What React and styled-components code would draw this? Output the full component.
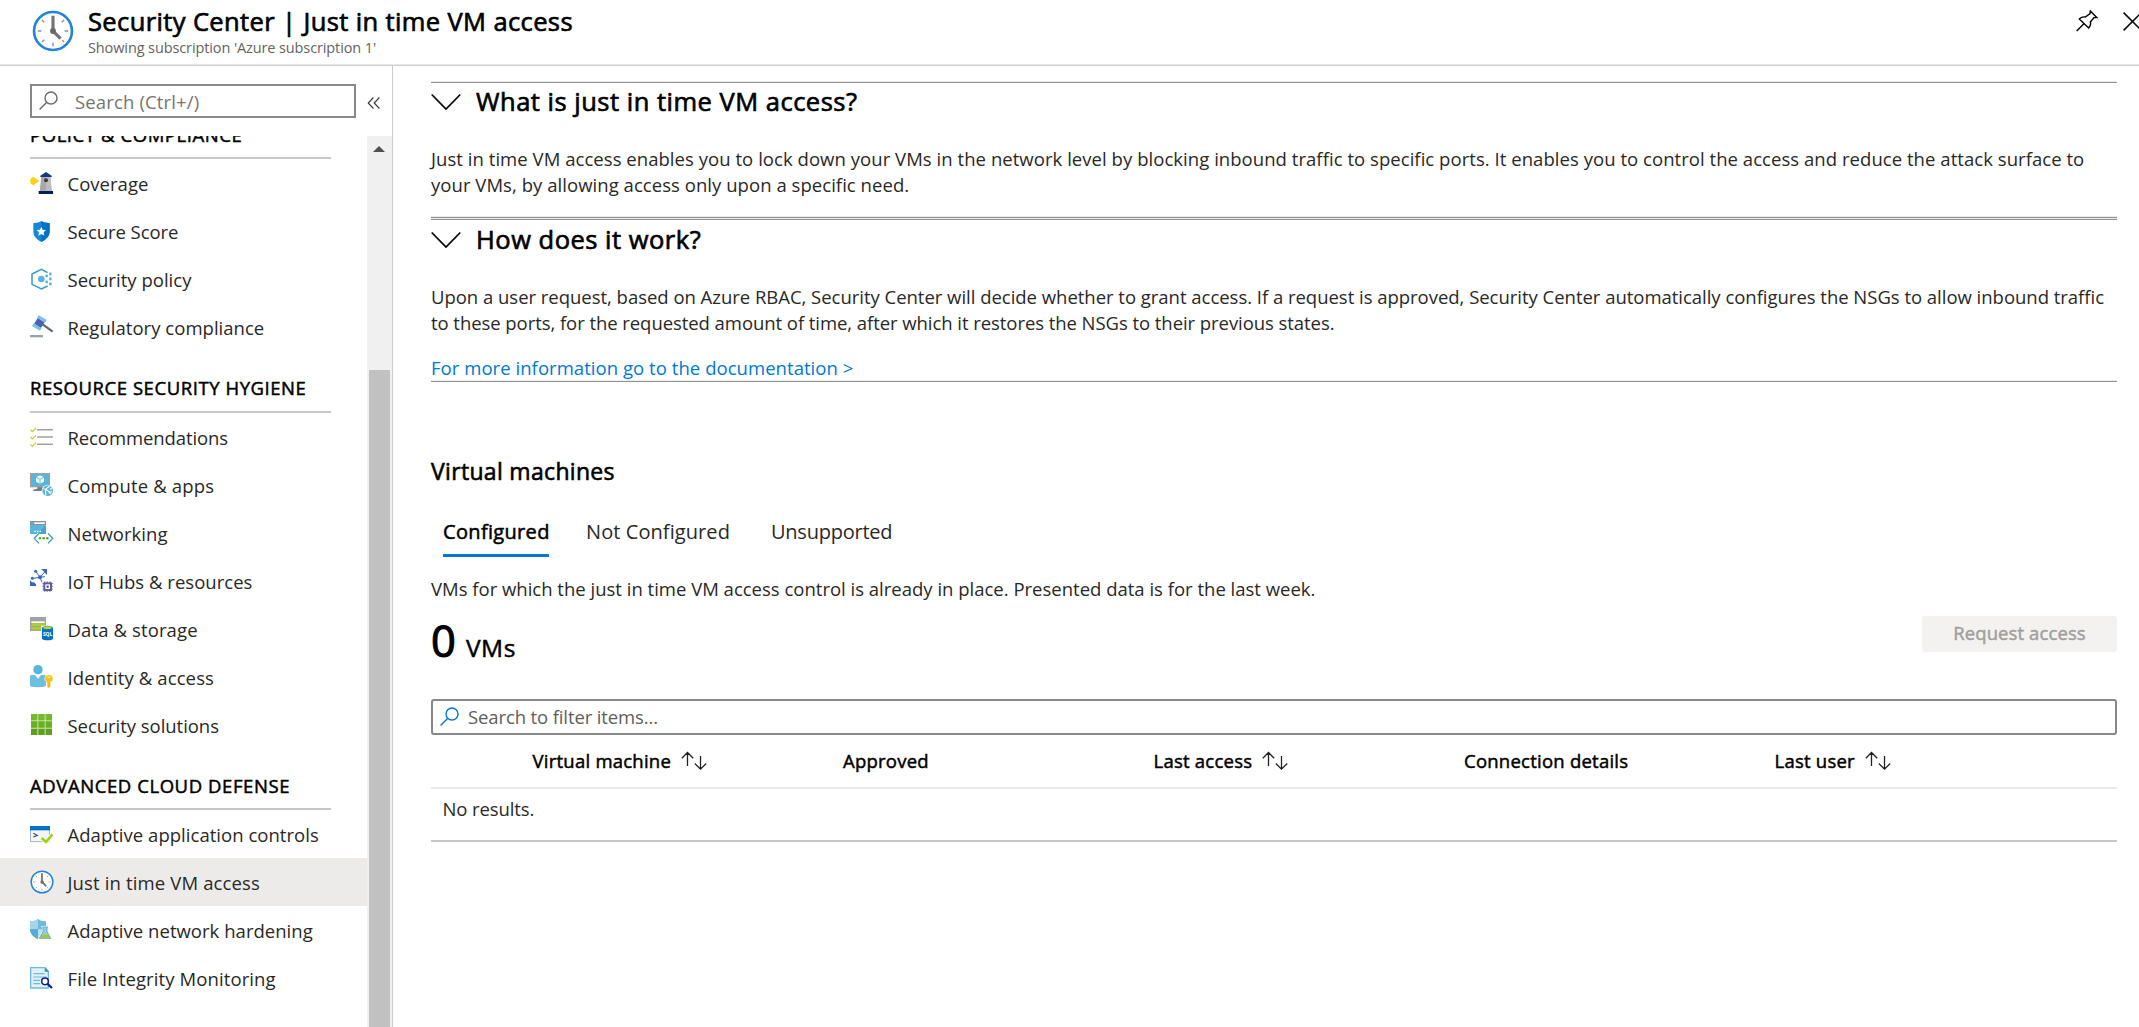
import React from "react";
import styled, { createGlobalStyle, css } from "styled-components";

const GlobalStyle = createGlobalStyle`
  * { box-sizing: border-box; }
  html, body { margin: 0; padding: 0; background: #fff; overflow: hidden; }
  body { font-family: "Open Sans", "Noto Sans", sans-serif; font-size: 18.5px; color: #292827; }
`;

/* A weight between regular and semibold, used by every heading. */
const semibold = css`
  font-weight: 400;
  -webkit-text-stroke: 0.026em currentColor;
`;

/* ---------- shell ---------- */
const Page = styled.div`
  width: 100vw;
  height: 100vh;
  display: flex;
  flex-direction: column;
  overflow: hidden;
`;
const Header = styled.header`
  height: 66px;
  flex: none;
  display: flex;
  align-items: flex-start;
  padding: 0 0 0 32px;
  border-bottom: 1px solid #cccccc;
  box-shadow: inset 0 -1px 0 #e9e9e9;
`;
const HeaderIcon = styled.div`
  width: 42px;
  height: 42px;
  margin-top: 10px;
  svg { display: block; }
`;
const Titles = styled.div`
  flex: 1;
  padding: 3px 0 0 14px;
`;
const Title = styled.h1`
  margin: 0;
  font-size: 25.5px;
  line-height: 36px;
  ${semibold}
  letter-spacing: 0.38px;
  color: #000;
`;
const Subtitle = styled.div`
  font-size: 14.5px;
  line-height: 20px;
  margin-top: -1px;
  letter-spacing: -0.11px;
  color: #646362;
`;
const HeaderActions = styled.div`
  display: flex;
  gap: 25px;
  padding-top: 10px;
  margin-right: -3px;
  svg { display: block; }
`;
const Body = styled.div`
  flex: 1;
  min-height: 0;
  display: flex;
`;

/* ---------- sidebar ---------- */
const Sidebar = styled.aside`
  width: 393px;
  flex: none;
  display: flex;
  flex-direction: column;
  border-right: 1px solid #cccccc;
`;
const SidebarTop = styled.div`
  display: flex;
  align-items: center;
  padding: 18px 0 18px 30px;
  gap: 11px;
`;
const MenuSearch = styled.div`
  width: 326px;
  height: 34px;
  display: flex;
  align-items: center;
  border: 2px solid #8a8886;
  padding-left: 7px;
  gap: 17px;
  color: #76746f;
  letter-spacing: 0.15px;
  line-height: 29px;
`;
const CollapseButton = styled.div`
  padding-top: 3px;
  svg { display: block; }
`;
const NavArea = styled.div`
  flex: 1;
  min-height: 0;
  display: flex;
  overflow: hidden;
`;
const NavList = styled.nav`
  width: 367px;
  flex: none;
  overflow: hidden;
`;
const Group = styled.section`
  &:first-child { margin-top: -39px; }
`;
const GroupTitle = styled.h2`
  margin: 0 36px 0 30px;
  height: ${(p) => p.$h}px;
  padding-top: ${(p) => p.$pad}px;
  border-bottom: 2px solid #c8c8c8;
  font-size: 18.5px;
  line-height: 29px;
  ${semibold}
  letter-spacing: ${(p) => p.$ls}px;
  color: #000;
  white-space: nowrap;
`;
const Item = styled.div`
  height: 48px;
  display: flex;
  align-items: center;
  gap: 13.5px;
  padding-left: 30px;
  background: ${(p) => (p.$active ? "#edebe9" : "transparent")};
  white-space: nowrap;
  svg { flex: none; }
`;
const ItemLabel = styled.span`
  padding-top: 1px;
  line-height: 26px;
  letter-spacing: ${(p) => p.$ls}px;
`;
const Track = styled.div`
  width: 25px;
  background: #f0f0f0;
  display: flex;
  flex-direction: column;
  align-items: flex-start;
  padding-left: 2px;
`;
const TrackArrow = styled.div`
  height: 234px;
  padding: 10px 0 0 4px;
  svg { display: block; }
`;
const Thumb = styled.div`
  width: 21px;
  flex: 1;
  background: #c1c1c1;
`;

/* ---------- content ---------- */
const Content = styled.main`
  flex: 1;
  min-width: 0;
  padding: 15px 22px 0 38px;
`;
const Accordion = styled.section`
  padding: ${(p) => p.$top || 2}px 0 ${(p) => p.$bottom}px;
  border-top: 1px solid #ececec;
  border-bottom: 1px solid #919191;
  box-shadow: inset 0 1px 0 #919191, inset 0 -1px 0 #ececec;
`;
const AccordionTitle = styled.h2`
  margin: 0 0 27px;
  display: flex;
  align-items: center;
  gap: 15px;
  font-size: 25.5px;
  line-height: 36px;
  ${semibold}
  color: #000;
  letter-spacing: 0.5px;
  svg { position: relative; top: 1px; }
`;
const Paragraph = styled.p`
  margin: 0;
  line-height: 26px;
  white-space: nowrap;
  letter-spacing: ${(p) => p.$ls || 0}px;
`;
const DocLink = styled.a`
  display: block;
  margin-top: 19px;
  line-height: 26px;
  color: #0078d4;
  letter-spacing: 0.05px;
`;
const SectionTitle = styled.h2`
  margin: 74px 0 0;
  font-size: 23px;
  line-height: 30px;
  ${semibold}
  letter-spacing: 0.32px;
  color: #000;
`;
const Tabs = styled.div`
  display: flex;
  gap: 37px;
  margin-top: 30px;
  padding-left: 12px;
`;
const Tab = styled.div`
  width: ${(p) => p.$w}px;
  font-size: 20px;
  line-height: 32px;
  padding-bottom: 6px;
  white-space: nowrap;
  ${(p) => p.$active && semibold}
  letter-spacing: ${(p) => p.$ls}px;
  color: ${(p) => (p.$active ? "#000" : "#292827")};
  border-bottom: 3px solid ${(p) => (p.$active ? "#0078d4" : "transparent")};
`;
const TabIntro = styled(Paragraph)`
  margin-top: 19px;
`;
const Summary = styled.div`
  margin-top: 12px;
  height: 50px;
  display: flex;
  justify-content: space-between;
  align-items: flex-start;
`;
const Count = styled.div`
  display: flex;
  align-items: baseline;
  gap: 10px;
  padding-top: 2px;
  color: #000;
  ${semibold}
`;
const CountNumber = styled.span`
  font-size: 43.5px;
  line-height: 50px;
  width: 25px;
  -webkit-text-stroke: 1.1px currentColor;
`;
const CountUnit = styled.span`
  font-size: 24.5px;
  letter-spacing: 0.5px;
`;
const RequestButton = styled.button`
  width: 195px;
  height: 36px;
  margin-top: 2px;
  padding: 0;
  border: 0;
  border-radius: 3px;
  background: #f3f2f1;
  color: #a19f9d;
  font: 400 18.5px/32px "Open Sans", sans-serif;
  padding-bottom: 3px;
  ${semibold}
  letter-spacing: 0.1px;
`;
const FilterBox = styled.div`
  margin-top: 35px;
  height: 36px;
  display: flex;
  align-items: center;
  gap: 9px;
  padding-left: 7px;
  border: 2px solid #8a8886;
  border-radius: 3px;
  color: #605e5c;
  letter-spacing: -0.12px;
  line-height: 30px;
`;
const TableHead = styled.div`
  display: grid;
  grid-template-columns: repeat(5, 310.5px);
  width: 100%;
  height: 54px;
  padding-left: 101.5px;
  border-bottom: 2px solid #eaeaea;
  color: #000;
`;
const HeadCell = styled.div`
  display: flex;
  align-items: center;
  gap: 10px;
  ${semibold}
  letter-spacing: 0.24px;
  line-height: 52px;
  white-space: nowrap;
`;
const EmptyRow = styled.div`
  height: 53px;
  padding-left: 11.5px;
  line-height: 40px;
  letter-spacing: -0.1px;
  border-bottom: 2px solid #c8c8c8;
`;

/* ---------- glyphs ---------- */
const Chevron = () => (
  <svg width="30" height="18" viewBox="0 0 30 18" fill="none" stroke="#000" strokeWidth="1.7">
    <path d="M.7 1.5 15 16 29.3 1.5" />
  </svg>
);
const Magnifier = ({ color }) => (
  <svg width="19" height="20" viewBox="0 0 19 20" fill="none" stroke={color} strokeWidth="1.4">
    <circle cx="12" cy="7" r="6" />
    <path d="M7.8 11.2.6 18.6" />
  </svg>
);
const Collapse = () => (
  <svg width="14" height="14" viewBox="0 0 14 14" fill="none" stroke="#333" strokeWidth="1.1">
    <path d="M6.4 1.5 1.200 7l5.200 5.500M12.400 1.500 7.200 7l5.200 5.500" />
  </svg>
);
const SortArrows = () => (
  <svg width="26" height="20" viewBox="0 0 26 20" fill="none" stroke="#222" strokeWidth="1.3">
    <path d="M6.5 15V1.6M.8 7.2l5.700-5.700 5.700 5.700M19.500 5V18M13.800 12.500l5.700 5.700 5.700-5.700" />
  </svg>
);
const Pin = () => (
  <svg width="22" height="22" viewBox="0 0 66 66" fill="none" stroke="#000" strokeWidth="4.2">
    <path d="M43 3 63 23l-9 0L43 36q3 9-5 18L10 27q8-8 18-6L42 11ZM23 42 2 63" />
  </svg>
);
const Close = () => (
  <svg width="19" height="22" viewBox="0 0 19 22" fill="none" stroke="#000" strokeWidth="1.5">
    <path d="M.6 2.6 18.4 20.4M18.4 2.6.6 20.4" />
  </svg>
);
const Clock = ({ size, ring }) => (
  <svg width={size} height={size} viewBox="0 0 72 72">
    <circle cx="36" cy="36" r="32.5" fill="#fff" stroke="#2283dc" strokeWidth={ring} />
    <g stroke="#8f8f8f" strokeWidth="2.4">
      <path d="M36 56v6M10 36h6M56 36h6M17 17l4 4M55 17l-4 4M17 55l4-4M55 55l-3-3" />
    </g>
    <path d="M36 10v26l13 13" fill="none" stroke="#757575" strokeWidth="5.4" />
    <circle cx="36" cy="36" r="5" fill="#6a6a6a" />
  </svg>
);
const Icon = ({ children }) => (
  <svg width="24" height="24" viewBox="0 0 72 72" fill="none">{children}</svg>
);

const icons = {
  coverage: (
    <Icon>
      <path d="M10 17 28 30 10 43 3 38q-5-8 0-16Z" fill="#fcd116" />
      <path d="M34 16h27l4 45H29Z" fill="#a9a9ab" />
      <path d="M48 16h13l4 45H48Z" fill="#bdbdbf" />
      <path d="M48 3 65 14v4H31v-4Z" fill="#15397f" />
      <path d="M26 60h43v9H26Z" fill="#00205b" />
      <circle cx="48" cy="28" r="6" fill="#3c3c41" />
    </Icon>
  ),
  score: (
    <Icon>
      <path d="M34 7q12 6 25 5v26q0 18-25 31Q10 56 10 38V12q13 1 24-5Z" fill="#1288d8" />
      <path d="M34 7q12 6 25 5v26q0 18-25 31Z" fill="#0072c6" />
      <path d="m34 23 4 9 10 1-7 7 2 10-9-5-9 5 2-10-7-7 10-1Z" fill="#fff" />
    </Icon>
  ),
  policy: (
    <Icon>
      <path d="M53 17 34 7 6 21v31l28 14 19-9" stroke="#3999c6" strokeWidth="4.5" />
      <circle cx="34" cy="36" r="10" fill="#59b4d9" />
      <g fill="#59b4d9">
        <circle cx="50" cy="27" r="4.2" /><circle cx="61" cy="21" r="4.2" /><circle cx="61" cy="36" r="4.2" />
        <circle cx="50" cy="45" r="4.2" /><circle cx="61" cy="51" r="4.2" />
      </g>
    </Icon>
  ),
  gavel: (
    <Icon>
      <path d="m38 28 30 22" stroke="#5d6b7a" strokeWidth="7" />
      <g transform="translate(28 24) rotate(-58)">
        <path d="M-10-12h20v24h-20Z" fill="#4f60b2" />
        <path d="M-19-14h9v28h-9ZM10-14h9v28h-9Z" fill="#76bfe8" />
      </g>
      <path d="M0 60h39v7H0Z" fill="#98a3ae" />
    </Icon>
  ),
  checklist: (
    <Icon>
      <path d="M21 14h48M21 36h48M21 58h48" stroke="#a0a1a2" strokeWidth="4.5" />
      <path d="m1 14 6 6L18 9M1 36l6 6 11-11M1 58l6 6 11-11" stroke="#b4d332" strokeWidth="3.6" />
    </Icon>
  ),
  compute: (
    <Icon>
      <path d="M22 42h16v6h6v6H10v-4l12-3Z" fill="#7a7a7a" />
      <path d="M0 0h60v43H0Z" fill="#a0a1a2" />
      <path d="M4 4h52v35H4Z" fill="#59b4d9" />
      <path d="m30 7 12 6v13l-12 6-12-6V13Z" fill="#eaf6fb" />
      <path d="m18 13 12 6 12-6M30 19v13" stroke="#59b4d9" strokeWidth="2.4" />
      <circle cx="53" cy="53" r="18" fill="#fff" />
      <circle cx="53" cy="53" r="16" fill="#59b4d9" />
      <path d="M40 47q8 0 13 6t13 3M59 40q-11 5-12 12t1 15M60 50l6-5M53 53l9 10" stroke="#fff" strokeWidth="3.2" />
    </Icon>
  ),
  network: (
    <Icon>
      <path d="M0 0h48v39H0Z" fill="#59b4d9" />
      <path d="M0 0h48v12H0Z" fill="#8f9294" />
      <path d="M13 4h31v5H13Z" fill="#fff" />
      <path d="M3 4h6v5H3Z" fill="#59b4d9" />
      <path d="M48 12v27H22Z" fill="#4aa3c9" />
      <path d="M13 29h4v4h-4ZM21 29h4v4h-4ZM29 29h4v4h-4Z" fill="#fff" />
      <path d="M27 37 13 52l14 15M54 37l14 15-14 15" stroke="#fff" strokeWidth="8" />
      <path d="M27 37 13 52l14 15M54 37l14 15-14 15" stroke="#3999c6" strokeWidth="4" />
      <g fill="#59a80f"><circle cx="30" cy="52" r="3.8" /><circle cx="41" cy="52" r="3.8" /><circle cx="52" cy="52" r="3.8" /></g>
    </Icon>
  ),
  iot: (
    <Icon>
      <path d="M33 0h18v18l-6-6-5-6ZM0 34l6 6h6l6 6v5H0Z" fill="#3468b8" />
      <path d="m18 8 12 17M9 28l21-3M30 25l15-2M30 25l6 15M30 25l14-16" stroke="#3468b8" strokeWidth="3" />
      <g fill="#3468b8">
        <circle cx="30" cy="25" r="6" /><circle cx="17" cy="7" r="4.5" /><circle cx="7" cy="28" r="4.5" />
      </g>
      <path d="M44 37v32M52 37v32M60 37v32M37 44h32M37 52h32M37 60h32" stroke="#8f9294" strokeWidth="3.6" />
      <path d="M40 40h26v26H40Z" fill="#5f5ea6" />
      <path d="M46 46h14v14H46Z" fill="#fff" />
      <path d="M50 50h6v6h-6Z" fill="#3a3a80" />
    </Icon>
  ),
  data: (
    <Icon>
      <path d="M0 0h48v42H0Z" fill="#a0a1a2" />
      <path d="M4 13h40v5H4Z" fill="#fff" />
      <path d="M4 19h40v8H4ZM4 30h40v8H4Z" fill="#b0cf2e" />
      <path d="M34 26h38v46H34Z" fill="#fff" />
      <path d="M36 33h33v31q0 6-16.500 6T36 64Z" fill="#0072c6" />
      <ellipse cx="52.5" cy="32.5" rx="16.5" ry="6" fill="#1583d0" />
      <ellipse cx="52.5" cy="32" rx="12.5" ry="4.2" fill="#b8d432" />
      <text x="52.5" y="57" textAnchor="middle" fontFamily="Open Sans" fontWeight="700" fontSize="14.5" fill="#fff">SQL</text>
    </Icon>
  ),
  identity: (
    <Icon>
      <path d="M0 34q0-4 5-4h10l9 11 9-11h10q5 0 5 5v28q-10 4-24 4T0 64Z" fill="#6cbfe0" />
      <circle cx="24" cy="14" r="14" fill="#59b4d9" />
      <path d="M57 29q13 2 12 13-1 7-7 10v13l-4 4h-4l-3-4V52q-7-3-7-10 0-11 13-13Z" fill="#fcc419" stroke="#fff" strokeWidth="1.5" />
      <path d="M53 37h8" stroke="#fff" strokeWidth="3" />
      <path d="M57 54v12" stroke="#f09d00" strokeWidth="2" />
    </Icon>
  ),
  solutions: (
    <Icon>
      <path d="M3 3h66v64H3Z" fill="#c9e4ab" />
      <path d="M3 3h19v19H3ZM25 3h19v19H25ZM47 3h19v19H47Z" fill="#76b82f" />
      <path d="M3 25h19v19H3ZM25 25h19v19H25ZM47 25h19v19H47Z" fill="#6aae22" />
      <path d="M3 47h19v19H3ZM25 47h19v19H25ZM47 47h19v19H47Z" fill="#5f9e20" />
      <path d="M66 0h6v72h-6ZM0 66h72v6H0Z" fill="#fff" />
    </Icon>
  ),
  appControl: (
    <Icon>
      <path d="M1.500 14h57v45h-57Z" fill="#f3f6f8" stroke="#a8b4bc" strokeWidth="3" />
      <path d="M0 12h60v13H0Z" fill="#0072c6" />
      <path d="m10 34 12 6-12 5" stroke="#3c4a56" strokeWidth="3.2" />
      <path d="m35 48 13 13 19-25" stroke="#fff" strokeWidth="12" />
      <path d="m35 48 13 12 19-23" stroke="#9bd10b" strokeWidth="7.5" />
    </Icon>
  ),
  clock: <Clock size={24} ring={4.5} />,
  hardening: (
    <Icon>
      <path d="M24 3q10 8 24 7v24q0 18-24 30Q0 52 0 34V10q14 1 24-7Z" fill="#6fbbdd" />
      <path d="M24 3v31H0V10q14 1 24-7Z" fill="#a5d5ea" />
      <path d="M24 34v30Q0 52 0 34Z" fill="#59abd4" />
      <path d="M24 34h24q0 18-24 30Z" fill="#b9dff0" />
      <path d="M34 24h22v4h-3v12l14 25H22l14-25V28h-2Z" fill="#fff" />
      <path d="M37 27h17M39 28v13L28 61h34L51 41V28" fill="#8fd0e8" stroke="#4a9cc4" strokeWidth="2.5" />
      <path d="M35 50h20l5 9H30Z" fill="#a9c926" />
    </Icon>
  ),
  file: (
    <Icon>
      <path d="M2 5h43l10 11v50H2Z" fill="#e1f1f9" stroke="#6fbbdd" strokeWidth="4" />
      <path d="M44 3v14h13Z" fill="#3a8fc0" />
      <path d="M10 23h34M10 33h38M10 43h20M10 53h20" stroke="#6fbbdd" strokeWidth="3.6" />
      <circle cx="45" cy="46" r="10" fill="#fff" stroke="#0b1f97" strokeWidth="4.5" />
      <path d="m52 53 14 13" stroke="#0b1f97" strokeWidth="6.5" />
    </Icon>
  ),
};

/* ---------- data ---------- */
const groups = [
  {
    title: "POLICY & COMPLIANCE", height: 62, pad: 23, spacing: 0.56,
    items: [
      { icon: "coverage", label: "Coverage" },
      { icon: "score", label: "Secure Score", spacing: -0.06 },
      { icon: "policy", label: "Security policy" },
      { icon: "gavel", label: "Regulatory compliance" },
    ],
  },
  {
    title: "RESOURCE SECURITY HYGIENE", height: 62, pad: 22, spacing: 0.56,
    items: [
      { icon: "checklist", label: "Recommendations", spacing: -0.1 },
      { icon: "compute", label: "Compute & apps", spacing: 0.17 },
      { icon: "network", label: "Networking" },
      { icon: "iot", label: "IoT Hubs & resources" },
      { icon: "data", label: "Data & storage", spacing: 0.12 },
      { icon: "identity", label: "Identity & access", spacing: 0.12 },
      { icon: "solutions", label: "Security solutions", spacing: -0.04 },
    ],
  },
  {
    title: "ADVANCED CLOUD DEFENSE", height: 61, pad: 22, spacing: 0.58,
    items: [
      { icon: "appControl", label: "Adaptive application controls" },
      { icon: "clock", label: "Just in time VM access", spacing: 0.14, active: true },
      { icon: "hardening", label: "Adaptive network hardening" },
      { icon: "file", label: "File Integrity Monitoring", spacing: 0.1 },
    ],
  },
];
const columns = [
  ["Virtual machine", true],
  ["Approved", false],
  ["Last access", true],
  ["Connection details", false],
  ["Last user", true],
];

export default function App() {
  return (
    <Page>
      <GlobalStyle />
      <Header>
        <HeaderIcon><Clock size={42} ring={4.5} /></HeaderIcon>
        <Titles>
          <Title>Security Center | Just in time VM access</Title>
          <Subtitle>Showing subscription 'Azure subscription 1'</Subtitle>
        </Titles>
        <HeaderActions>
          <Pin />
          <Close />
        </HeaderActions>
      </Header>
      <Body>
        <Sidebar>
          <SidebarTop>
            <MenuSearch>
              <Magnifier color="#6b6967" />
              Search (Ctrl+/)
            </MenuSearch>
            <CollapseButton><Collapse /></CollapseButton>
          </SidebarTop>
          <NavArea>
            <NavList>
              {groups.map((g) => (
                <Group key={g.title}>
                  <GroupTitle $h={g.height} $pad={g.pad} $ls={g.spacing}>{g.title}</GroupTitle>
                  {g.items.map(({ icon, label, active, spacing = 0.03 }) => (
                    <Item key={label} $active={active}>
                      {icons[icon]}
                      <ItemLabel $ls={spacing}>{label}</ItemLabel>
                    </Item>
                  ))}
                </Group>
              ))}
            </NavList>
            <Track>
              <TrackArrow>
                <svg width="12" height="6" viewBox="0 0 12 6"><path d="M6 0 12 6H0Z" fill="#505050" /></svg>
              </TrackArrow>
              <Thumb />
            </Track>
          </NavArea>
        </Sidebar>
        <Content>
          <Accordion $top={1} $bottom={19}>
            <AccordionTitle><Chevron />What is just in time VM access?</AccordionTitle>
            <Paragraph $ls={0.048}>
              Just in time VM access enables you to lock down your VMs in the network level by blocking inbound traffic to specific ports. It enables you to control the access and reduce the attack surface to
              <br />
              your VMs, by allowing access only upon a specific need.
            </Paragraph>
          </Accordion>
          <Accordion $top={2} $bottom={0}>
            <AccordionTitle><Chevron />How does it work?</AccordionTitle>
            <Paragraph $ls={-0.023}>
              Upon a user request, based on Azure RBAC, Security Center will decide whether to grant access. If a request is approved, Security Center automatically configures the NSGs to allow inbound traffic
            </Paragraph>
            <Paragraph $ls={-0.06}>
              to these ports, for the requested amount of time, after which it restores the NSGs to their previous states.
            </Paragraph>
            <DocLink>For more information go to the documentation &gt;</DocLink>
          </Accordion>
          <SectionTitle>Virtual machines</SectionTitle>
          <Tabs>
            <Tab $active $w={106} $ls={0.33}>Configured</Tab>
            <Tab $w={148} $ls={0.08}>Not Configured</Tab>
            <Tab $w={121} $ls={-0.24}>Unsupported</Tab>
          </Tabs>
          <TabIntro>VMs for which the just in time VM access control is already in place. Presented data is for the last week.</TabIntro>
          <Summary>
            <Count>
              <CountNumber>0</CountNumber>
              <CountUnit>VMs</CountUnit>
            </Count>
            <RequestButton>Request access</RequestButton>
          </Summary>
          <FilterBox>
            <Magnifier color="#0078d4" />
            Search to filter items...
          </FilterBox>
          <TableHead>
            {columns.map(([name, sortable]) => (
              <HeadCell key={name}>
                {name}
                {sortable && <SortArrows />}
              </HeadCell>
            ))}
          </TableHead>
          <EmptyRow>No results.</EmptyRow>
        </Content>
      </Body>
    </Page>
  );
}
